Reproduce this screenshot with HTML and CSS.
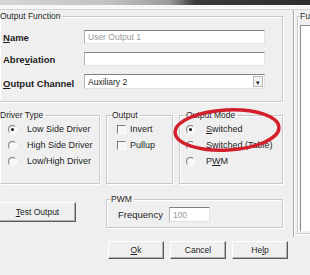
FILE: index.html
```html
<!DOCTYPE html>
<html lang="en">
<head>
    <meta charset="UTF-8">
    <meta name="viewport" content="width=device-width, initial-scale=1.0">
    <title>Output Settings</title>
    <link rel="stylesheet" href="styles.css">
</head>
<body>
    <div class="titlebar"></div>
    <div class="strip"></div>

    <div class="dialog">
        <div class="left">
            <fieldset class="group cut func">
                <legend>Output Function</legend>
                <div class="form">
                    <label class="lbl"><u>N</u>ame</label>
                    <input class="field hint" type="text" value="User Output 1" readonly>
                    <label class="lbl">Abre<u>v</u>iation</label>
                    <input class="field" type="text" value="" readonly>
                    <label class="lbl chan"><u>O</u>utput Channel</label>
                    <div class="field select chan">
                        <span>Auxiliary 2</span>
                        <span class="arrow">&#9662;</span>
                    </div>
                </div>
            </fieldset>

            <div class="row3">
                <fieldset class="group cut driver">
                    <legend>Driver Type</legend>
                    <div class="opts">
                        <div class="opt"><span class="radio on"></span>Low Side Driver</div>
                        <div class="opt"><span class="radio"></span>High Side Driver</div>
                        <div class="opt"><span class="radio"></span>Low/High Driver</div>
                    </div>
                </fieldset>
                <fieldset class="group output">
                    <legend>Output</legend>
                    <div class="opts">
                        <div class="opt"><span class="check"></span>Invert</div>
                        <div class="opt"><span class="check"></span>Pullup</div>
                    </div>
                </fieldset>
                <fieldset class="group mode">
                    <legend>Output Mode</legend>
                    <div class="opts">
                        <div class="opt"><span class="radio on"></span><u>S</u>witched</div>
                        <div class="opt"><span class="radio"></span><u>S</u>witched (Table)</div>
                        <div class="opt"><span class="radio"></span>P<u>W</u>M</div>
                    </div>
                </fieldset>
            </div>

            <div class="row-pwm">
                <button class="btn test"><u>T</u>est Output</button>
                <fieldset class="group pwm">
                    <legend>PWM</legend>
                    <div class="freq">
                        <span>Frequency</span>
                        <input class="field hint small" type="text" value="100" readonly>
                    </div>
                </fieldset>
            </div>

            <div class="actions">
                <button class="btn"><u>O</u>k</button>
                <button class="btn">Cancel</button>
                <button class="btn">He<u>l</u>p</button>
            </div>
        </div>

        <div class="sep"></div>

        <fieldset class="group funcs">
            <legend>Fu</legend>
            <div class="list"></div>
        </fieldset>
    </div>

    <svg class="mark" width="116" height="52" viewBox="0 0 116 52">
        <ellipse cx="57" cy="24" rx="52" ry="20" fill="none" stroke="#d21f2b" stroke-width="3.4" transform="rotate(-3 57 24)"/>
    </svg>
</body>
</html>
```

FILE: styles.css
```css
body {
    margin: 0;
    width: 310px;
    height: 275px;
    overflow: hidden;
    position: relative;
    background: #efefef;
    color: #1e1e1e;
    font-family: "Liberation Sans", Arial, sans-serif;
    font-size: 9px;
}
.titlebar {
    height: 5px;
    background: linear-gradient(to right, #d6d6d6 0, #c2c2c2 110px, #9a9a9a 170px, #3a3a3a 195px, #2e2e2e 100%);
}
.strip {
    height: 4px;
    background: #f7f7f7;
    border-bottom: 1px solid #d4d4d4;
}
.dialog {
    display: flex;
}
.left {
    width: 283px;
    flex: none;
}
.group {
    margin: 0;
    padding: 0;
    min-width: 0;
    box-sizing: border-box;
    border: 1px solid #c9c9c9;
    box-shadow: inset 1px 1px 0 #fff, 1px 1px 0 #fff;
}
.group.cut {
    border-left: none;
}
.group legend {
    padding: 0 2px 0 0;
    margin-left: 5px;
    line-height: 12px;
    font-size: 8.5px;
}
.group.cut legend {
    margin-left: 0;
}
u {
    text-decoration: underline;
    text-underline-offset: 1px;
}

/* output function */
.form {
    display: grid;
    grid-template-columns: 81px 181px;
    row-gap: 8px;
    align-items: center;
    padding: 8px 0 12px 3px;
}
.lbl {
    font-weight: bold;
    font-size: 9.5px;
}
.chan {
    margin-top: 4px;
}
.field {
    box-sizing: border-box;
    height: 14px;
    margin: 0;
    padding: 0 3px;
    background: #fff;
    border: 1px solid #e2e2e2;
    border-top-color: #808080;
    border-left-color: #b4b4b4;
    font-family: "Liberation Sans", Arial, sans-serif;
    font-size: 8.5px;
    color: #1e1e1e;
    outline: none;
}
.hint {
    color: #9a9a9a;
}
.select {
    height: 15px;
    display: flex;
    align-items: center;
    justify-content: space-between;
    padding-right: 1px;
}
.arrow {
    box-sizing: border-box;
    width: 10px;
    height: 11px;
    line-height: 11px;
    text-align: center;
    font-size: 7px;
    background: #f2f2f2;
    border: 1px solid #b8b8b8;
}

/* option groups */
.row3 {
    display: flex;
    gap: 6px;
    margin-top: 7px;
}
.driver {
    width: 100px;
}
.output {
    width: 67px;
}
.mode {
    width: 104px;
}
.mode legend {
    margin-left: 6px;
}
.opts {
    padding: 0 0 14px 8px;
}
.output .opts {
    padding-left: 10px;
}
.mode .opts {
    padding-left: 6px;
}
.opt {
    display: flex;
    align-items: center;
    height: 16px;
    white-space: nowrap;
}
.radio {
    box-sizing: border-box;
    width: 9px;
    height: 9px;
    margin-right: 6px;
    border-radius: 50%;
    border: 1px solid #fff;
    border-top-color: #7c7c7c;
    border-left-color: #7c7c7c;
    background: #f7f7f7;
    display: flex;
    align-items: center;
    justify-content: center;
}
.radio.on::after {
    content: "";
    width: 3px;
    height: 3px;
    border-radius: 50%;
    background: #111;
}
.driver .radio {
    margin-right: 10px;
}
.mode .radio {
    margin-right: 11px;
}
.check {
    box-sizing: border-box;
    width: 9px;
    height: 9px;
    margin-right: 4px;
    border: 1px solid #fff;
    border-top-color: #7c7c7c;
    border-left-color: #7c7c7c;
    background: #f7f7f7;
}

/* pwm row */
.row-pwm {
    display: flex;
    align-items: flex-start;
    gap: 30px;
    margin-top: 9px;
}
.btn {
    box-sizing: border-box;
    height: 18px;
    padding: 0;
    background: #efefef;
    border: 1px solid #fff;
    border-right-color: #5a5a5a;
    border-bottom-color: #5a5a5a;
    box-shadow: inset -1px -1px 0 #b0b0b0;
    font-family: "Liberation Sans", Arial, sans-serif;
    font-size: 8.5px;
    color: #1e1e1e;
}
.test {
    width: 76px;
    height: 20px;
    margin-top: 9px;
    border-left: none;
}
.pwm {
    width: 177px;
}
.pwm legend {
    margin-left: 4px;
}
.freq {
    display: flex;
    align-items: center;
    gap: 6px;
    padding: 2px 0 5px 11px;
    font-size: 9.5px;
}
.small {
    width: 41px;
    height: 15px;
}

/* dialog buttons */
.actions {
    display: flex;
    gap: 6px;
    margin-top: 13px;
    padding-left: 108px;
}
.actions .btn {
    width: 56px;
    flex: none;
}

/* function list */
.sep {
    flex: none;
    width: 1px;
    height: 227px;
    margin-left: 10px;
    background: #a8a8a8;
    box-shadow: 1px 0 0 #fff;
}
.funcs {
    flex: none;
    width: 13px;
    margin-left: 3px;
    height: 224px;
    padding: 3px 0 0 2px;
    border-right: none;
}
.funcs legend {
    margin-left: 0;
    padding: 0;
}
.list {
    height: 205px;
    background: #fff;
    border-top: 1px solid #8a8a8a;
    border-left: 1px solid #8a8a8a;
}

.mark {
    position: absolute;
    left: 170px;
    top: 106px;
}
```
